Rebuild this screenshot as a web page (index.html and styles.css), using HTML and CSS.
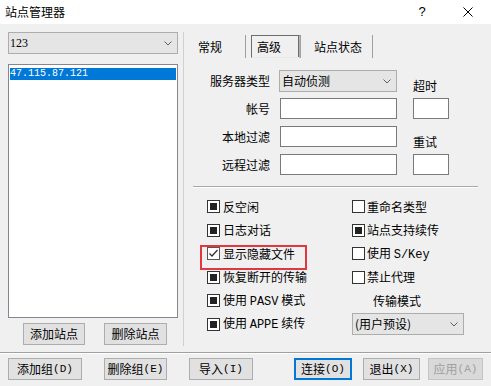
FILE: index.html
```html
<!DOCTYPE html>
<html lang="zh-CN">
<head>
<meta charset="utf-8">
<title>站点管理器</title>
<link rel="stylesheet" href="styles.css">
</head>
<body>
<div class="titlebar">
  <span class="title">站点管理器</span>
  <span class="help">?</span>
  <span class="close"><svg width="10" height="10" viewBox="0 0 10 10"><path d="M0.5 0.5 L9.5 9.5 M9.5 0.5 L0.5 9.5" stroke="#000" stroke-width="1" fill="none"/></svg></span>
</div>
<div class="main">
  <div class="left">
    <div class="combo site-combo"><span class="serif">123</span><svg class="chev" width="8" height="5" viewBox="0 0 8 5"><polyline points="0.5,0.5 4,4 7.5,0.5" fill="none" stroke="#606060" stroke-width="1"/></svg></div>
    <div class="listbox">
      <div class="item sel">47.115.87.121</div>
    </div>
    <div class="left-buttons">
      <button class="btn w62">添加站点</button>
      <button class="btn w63">删除站点</button>
    </div>
  </div>
  <div class="right">
    <div class="tabs">
      <div class="tab tab1">常规</div>
      <div class="tab tab2">高级</div>
      <div class="tab tab3">站点状态</div>
    </div>
    <div class="form">
      <div class="lbl">服务器类型</div>
      <div class="combo type-combo"><span>自动侦测</span><svg class="chev" width="8" height="5" viewBox="0 0 8 5"><polyline points="0.5,0.5 4,4 7.5,0.5" fill="none" stroke="#606060" stroke-width="1"/></svg></div>
      <div class="c3 side-lbl">超时</div>

      <div class="lbl">帐号</div>
      <div class="input"></div>
      <div class="c3 input small"></div>

      <div class="lbl">本地过滤</div>
      <div class="input"></div>
      <div class="c3 side-lbl">重试</div>

      <div class="lbl">远程过滤</div>
      <div class="input"></div>
      <div class="c3 input small"></div>
    </div>
    <div class="sep"></div>
    <div class="checks">
      <div class="chk"><span class="box filled"></span><span>反空闲</span></div>
      <div class="chk right-chk"><span class="box"></span><span>重命名类型</span></div>

      <div class="chk"><span class="box filled"></span><span>日志对话</span></div>
      <div class="chk right-chk"><span class="box filled"></span><span>站点支持续传</span></div>

      <div class="chk hl"><span class="box checked"><svg width="11" height="11" viewBox="0 0 11 11"><polyline points="1.5,5.5 4,8 9.5,2" fill="none" stroke="#333" stroke-width="1.3"/></svg></span><span>显示隐藏文件</span></div>
      <div class="chk right-chk"><span class="box"></span><span>使用 <span class="mc">S/Key</span></span></div>

      <div class="chk"><span class="box filled"></span><span>恢复断开的传输</span></div>
      <div class="chk right-chk"><span class="box"></span><span>禁止代理</span></div>

      <div class="chk"><span class="box filled"></span><span>使用 <span class="mc">PASV</span> 模式</span></div>
      <div class="mode-lbl">传输模式</div>

      <div class="chk"><span class="box filled"></span><span>使用 <span class="mc">APPE</span> 续传</span></div>
      <div class="combo mode-combo"><span>(用户预设)</span><svg class="chev" width="8" height="5" viewBox="0 0 8 5"><polyline points="0.5,0.5 4,4 7.5,0.5" fill="none" stroke="#606060" stroke-width="1"/></svg></div>
    </div>
  </div>
</div>
<div class="hsep"></div>
<div class="bottom">
  <button class="btn b1">添加组<span class="m">(D)</span></button>
  <button class="btn b2">删除组<span class="m">(E)</span></button>
  <button class="btn b3">导入<span class="m">(I)</span></button>
  <button class="btn b4 focus">连接<span class="m">(O)</span></button>
  <button class="btn b5">退出<span class="m">(X)</span></button>
  <button class="btn b6 disabled">应用<span class="m">(A)</span></button>
</div>
</body>
</html>
```
FILE: styles.css
```css
* { box-sizing: border-box; }
html, body { margin: 0; padding: 0; }
body {
  width: 491px;
  height: 386px;
  overflow: hidden;
  background: #f0f0f0;
  font-family: "Noto Sans CJK SC", "Noto Sans", sans-serif;
  font-size: 12px;
  line-height: 16px;
  color: #000;
}

.titlebar {
  height: 24px;
  background: #fff;
  display: flex;
  align-items: center;
}
.title { flex: 1; padding-left: 5px; }
.help {
  width: 46px;
  text-align: center;
  font-family: "Liberation Sans", sans-serif;
  font-size: 13px;
}
.close {
  width: 46px;
  height: 24px;
  display: flex;
  align-items: center;
  justify-content: center;
}

.main {
  display: flex;
  height: 328px;
  padding: 8px 0 0 8px;
}

.left {
  width: 170px;
  display: flex;
  flex-direction: column;
}

.combo {
  height: 22px;
  border: 1px solid #adadad;
  background: #e5e5e5;
  display: flex;
  align-items: center;
  justify-content: space-between;
  padding: 0 5px 0 2px;
}
.serif { font-family: "Liberation Serif", serif; font-size: 12px; }
.site-combo { padding-left: 1px; }

.listbox {
  margin-top: 10px;
  height: 254px;
  border: 1px solid #828790;
  background: #fff;
  padding: 3px 1px;
}
.item {
  height: 12px;
  line-height: 12px;
  font-family: "Liberation Mono", monospace;
  font-size: 10px;
  padding-left: 0;
}
.item.sel { background: #0078d7; color: #fff; }

.left-buttons {
  margin-top: 5px;
  display: flex;
  gap: 19px;
  padding-left: 15px;
}

.btn {
  height: 22px;
  border: 1px solid #adadad;
  background: #e1e1e1;
  font: inherit;
  color: #000;
  padding: 0;
  margin: 0;
  display: flex;
  align-items: center;
  justify-content: center;
}
.w62 { width: 62px; }
.w63 { width: 63px; }

.m {
  font-family: "Liberation Mono", monospace;
  font-size: 11px;
}
.mc {
  font-family: "Liberation Mono", monospace;
  font-size: 12px;
}

.right {
  margin-left: 5px;
  width: 308px;
  height: 314px;
  border-left: 1px solid #d0d0d0;
  display: flex;
  flex-direction: column;
}

.tabs {
  display: flex;
  height: 23px;
  margin-top: 3px;
}
.tab { display: flex; align-items: center; }
.tab1 {
  width: 62px;
  padding-left: 14px;
  border-right: 1px solid #a0a0a0;
}
.tab2 {
  margin-left: 5px;
  width: 49px;
  padding-left: 5px;
  border-top: 1px solid #6d6d6d;
  border-left: 1px solid #6d6d6d;
  border-right: 1px solid #b5b5b5;
  border-bottom: 1px solid #e8e8e8;
  box-shadow: inset -3px 0 0 -2px #6d6d6d, 1px 0 0 #a0a0a0;
}
.tab3 {
  width: 73px;
  padding-left: 14px;
  border-right: 1px solid #a0a0a0;
}

.form {
  margin-top: 12px;
  display: grid;
  grid-template-columns: 86px 117px 42px;
  grid-template-rows: repeat(4, 21px);
  column-gap: 10px;
  row-gap: 7px;
}
.lbl {
  text-align: right;
  align-self: center;
}
.type-combo {
  align-self: start;
  height: 22px;
  margin-left: -1px;
  width: 118px;
}
.input {
  height: 21px;
  border: 1px solid #7a7a7a;
  background: #fff;
}
.c3 { margin-left: 6px; width: 36px; }
.side-lbl {
  align-self: start;
  padding-top: 9px;
  line-height: 14px;
  white-space: nowrap;
}

.sep {
  margin-top: 11px;
  margin-left: 9px;
  width: 285px;
  height: 2px;
  border-top: 1px solid #a9a9a9;
  border-bottom: 1px solid #fff;
}

.checks {
  margin-top: 7px;
  padding-left: 23px;
  display: grid;
  grid-template-columns: 145px 130px;
  grid-auto-rows: 23.5px;
}
.chk {
  display: flex;
  align-items: center;
  gap: 3px;
  white-space: nowrap;
}
.right-chk { gap: 2px; }
.box {
  width: 13px;
  height: 13px;
  border: 1px solid #333;
  background: #fff;
  position: relative;
  flex: none;
  display: flex;
  align-items: center;
  justify-content: center;
}
.box.filled::after {
  content: "";
  width: 7px;
  height: 7px;
  background: #222;
}
.box.checked { border-color: #555; }

.hl { position: relative; }
.hl::after {
  content: "";
  position: absolute;
  left: -7px;
  top: 3px;
  width: 103px;
  height: 21px;
  border: 2px solid #e0383e;
}

.mode-lbl {
  align-self: center;
  padding-left: 21px;
}
.mode-combo {
  align-self: center;
  width: 112px;
  padding-left: 2px;
}

.hsep {
  height: 2px;
  border-top: 1px solid #a0a0a0;
  border-bottom: 1px solid #fff;
}

.bottom {
  display: flex;
  padding: 4px 0 0 8px;
}
.b1 { width: 74px; }
.b2 { width: 63px; margin-left: 22px; }
.b3 { width: 64px; margin-left: 22px; }
.b4 { width: 58px; margin-left: 41px; }
.b5 { width: 57px; margin-left: 11px; }
.b6 { width: 55px; margin-left: 8px; }
.btn.focus {
  border-color: #0078d7;
  box-shadow: inset 0 0 0 1px #0078d7;
}
.btn.disabled {
  background: #d9d9d9;
  border-color: #c4c4c4;
  color: #a0a0a0;
}
```
